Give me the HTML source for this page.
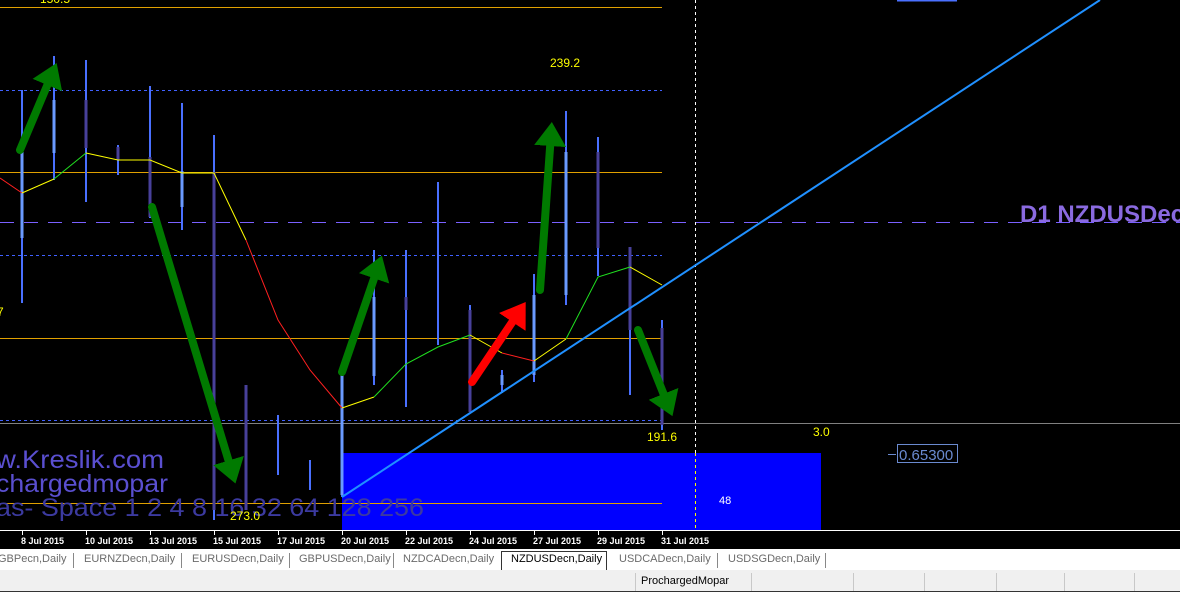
<!DOCTYPE html>
<html><head><meta charset="utf-8"><style>
body{margin:0;width:1180px;height:592px;overflow:hidden;background:#000;font-family:"Liberation Sans",sans-serif}
svg{position:absolute;left:0;top:0}
.tabs{position:absolute;left:0;top:550px;width:1180px;height:19px;background:#fff;border-top:1px solid #fff}
.tab{position:absolute;top:2px;font-size:11px;color:#6b6b6b;white-space:nowrap}
.sep{position:absolute;top:2px;width:1px;height:15px;background:#888}
.status{position:absolute;left:0;top:570px;width:1180px;height:21px;background:#f0f0f0;border-bottom:1px solid #333}
.ss{position:absolute;top:3px;width:1px;height:18px;background:#c8c8c8}
</style></head><body>
<svg width="1180" height="550" viewBox="0 0 1180 550" font-family="Liberation Sans, sans-serif">
<rect x="0" y="0" width="1180" height="550" fill="#000"/>
<rect x="342" y="453" width="479" height="77" fill="#0000ff"/>
<g stroke-width="1" shape-rendering="crispEdges">
<line x1="0" y1="7.5" x2="662" y2="7.5" stroke="#e0a000"/>
<line x1="0" y1="90.5" x2="662" y2="90.5" stroke="#4060ff" stroke-dasharray="3,3"/>
<line x1="0" y1="172.5" x2="662" y2="172.5" stroke="#e0a000"/>
<line x1="0" y1="222.5" x2="1180" y2="222.5" stroke="#7a60ff" stroke-dasharray="14,10"/>
<line x1="0" y1="255.5" x2="662" y2="255.5" stroke="#4060ff" stroke-dasharray="3,3"/>
<line x1="0" y1="338.5" x2="662" y2="338.5" stroke="#e0a000"/>
<line x1="0" y1="420.5" x2="662" y2="420.5" stroke="#4060ff" stroke-dasharray="3,3"/>
<line x1="0" y1="423.5" x2="1180" y2="423.5" stroke="#808080"/>
<line x1="0" y1="503.5" x2="662" y2="503.5" stroke="#e0a000"/>
<line x1="695.5" y1="0" x2="695.5" y2="453" stroke="#fff" stroke-dasharray="3,3"/>
<line x1="695.5" y1="453" x2="695.5" y2="530" stroke="#ff0" stroke-dasharray="3,3"/>
<line x1="897" y1="0.5" x2="957" y2="0.5" stroke="#4a70ff" stroke-width="2"/>
<line x1="0" y1="530.5" x2="1180" y2="530.5" stroke="#fff"/>
</g>
<text x="-4" y="468" font-size="25" fill="#5a4fd0" textLength="168" lengthAdjust="spacingAndGlyphs">w.Kreslik.com</text>
<text x="-4" y="492" font-size="25" fill="#5a4fd0" textLength="172" lengthAdjust="spacingAndGlyphs">chargedmopar</text>
<text x="-4" y="516" font-size="25" fill="#3c3aa0" textLength="428" lengthAdjust="spacingAndGlyphs">as- Space 1 2 4 8 16 32 64 128 256</text>
<g stroke-width="2">
<g stroke="#4a70ff">
<line x1="22" y1="90" x2="22" y2="303"/><line x1="54" y1="56" x2="54" y2="180"/><line x1="86" y1="60" x2="86" y2="202"/>
<line x1="118" y1="145" x2="118" y2="175"/><line x1="150" y1="86" x2="150" y2="218"/><line x1="182" y1="103" x2="182" y2="230"/>
<line x1="214" y1="135" x2="214" y2="520"/><line x1="246" y1="385" x2="246" y2="510"/><line x1="278" y1="415" x2="278" y2="475"/>
<line x1="310" y1="460" x2="310" y2="490"/><line x1="342" y1="370" x2="342" y2="497"/><line x1="374" y1="250" x2="374" y2="385"/>
<line x1="406" y1="250" x2="406" y2="407"/><line x1="438" y1="182" x2="438" y2="345"/><line x1="470" y1="305" x2="470" y2="412"/>
<line x1="502" y1="370" x2="502" y2="393"/><line x1="534" y1="274" x2="534" y2="382"/><line x1="566" y1="111" x2="566" y2="305"/>
<line x1="598" y1="137" x2="598" y2="276"/><line x1="630" y1="247" x2="630" y2="395"/><line x1="662" y1="320" x2="662" y2="430"/>
</g>
<g stroke="#6a9aff" stroke-width="3">
<line x1="22" y1="152" x2="22" y2="238"/><line x1="54" y1="100" x2="54" y2="153"/><line x1="182" y1="171" x2="182" y2="207"/>
<line x1="342" y1="375" x2="342" y2="495"/><line x1="374" y1="297" x2="374" y2="376"/><line x1="502" y1="375" x2="502" y2="385"/>
<line x1="534" y1="295" x2="534" y2="375"/><line x1="566" y1="152" x2="566" y2="295"/>
</g>
<g stroke="#48409a" stroke-width="3">
<line x1="86" y1="100" x2="86" y2="148"/><line x1="118" y1="147" x2="118" y2="160"/><line x1="150" y1="157" x2="150" y2="217"/>
<line x1="214" y1="172" x2="214" y2="510"/><line x1="246" y1="385" x2="246" y2="510"/><line x1="406" y1="297" x2="406" y2="310"/>
<line x1="470" y1="310" x2="470" y2="412"/><line x1="598" y1="152" x2="598" y2="248"/><line x1="630" y1="247" x2="630" y2="330"/>
<line x1="662" y1="328" x2="662" y2="425"/>
</g>
</g>
<g fill="none" stroke-width="1">
<polyline stroke="#ff2020" points="0,178 22,193"/>
<polyline stroke="#ffff00" points="22,193 54,179"/>
<polyline stroke="#20e020" points="54,179 86,153"/>
<polyline stroke="#ffff00" points="86,153 118,160 150,160 182,173 214,173 246,240"/>
<polyline stroke="#ff2020" points="246,240 278,320 310,370 342,408"/>
<polyline stroke="#ffff00" points="342,408 374,397"/>
<polyline stroke="#20e020" points="374,397 406,364 438,347 470,335"/>
<polyline stroke="#ffff00" points="470,335 502,353"/>
<polyline stroke="#ff2020" points="502,353 534,361"/>
<polyline stroke="#ffff00" points="534,361 566,339"/>
<polyline stroke="#20e020" points="566,339 598,277 630,267"/>
<polyline stroke="#ffff00" points="630,267 662,285"/>
</g>
<line x1="342" y1="497" x2="1100" y2="0" stroke="#2090ff" stroke-width="2"/>
<defs>
<marker id="hg" markerWidth="4" markerHeight="4" refX="1.5" refY="2" orient="auto" markerUnits="strokeWidth"><path d="M0,0 L3,2 L0,4 Z" fill="#007a00"/></marker>
<marker id="hr" markerWidth="4" markerHeight="4" refX="1.5" refY="2" orient="auto" markerUnits="strokeWidth"><path d="M0,0 L3,2 L0,4 Z" fill="#ff0000"/></marker>
</defs>
<g stroke="#007a00" stroke-width="8" stroke-linecap="round" marker-end="url(#hg)">
<line x1="20" y1="150" x2="52" y2="74"/>
<line x1="152" y1="207" x2="232" y2="472"/>
<line x1="342" y1="372" x2="378" y2="267"/>
<line x1="540" y1="290" x2="551" y2="134"/>
<line x1="638" y1="330" x2="668" y2="405"/>
</g>
<line x1="472" y1="382" x2="519" y2="312" stroke="#ff0000" stroke-width="8" stroke-linecap="round" marker-end="url(#hr)"/>
<g font-size="12" fill="#ffff00">
<text x="40" y="3">150.5</text><text x="550" y="67">239.2</text><text x="647" y="441">191.6</text>
<text x="230" y="520">273.0</text><text x="-3" y="316">7</text><text x="813" y="436">3.0</text>
</g>
<text x="719" y="504" font-size="11" fill="#fff">48</text>
<line x1="888" y1="454.5" x2="896" y2="454.5" stroke="#6a8ad0"/>
<rect x="897.5" y="444.5" width="60" height="18" fill="none" stroke="#6a8ad0"/>
<text x="899" y="460" font-size="15" fill="#6a8ad0">0.65300</text>
<text x="1020" y="222" font-size="24" font-weight="bold" fill="#8a6ae0">D1 NZDUSDecn</text>
<g stroke="#fff" shape-rendering="crispEdges">
<line x1="22.5" y1="531" x2="22.5" y2="535"/><line x1="86.5" y1="531" x2="86.5" y2="535"/><line x1="150.5" y1="531" x2="150.5" y2="535"/>
<line x1="214.5" y1="531" x2="214.5" y2="535"/><line x1="278.5" y1="531" x2="278.5" y2="535"/><line x1="342.5" y1="531" x2="342.5" y2="535"/>
<line x1="406.5" y1="531" x2="406.5" y2="535"/><line x1="470.5" y1="531" x2="470.5" y2="535"/><line x1="534.5" y1="531" x2="534.5" y2="535"/>
<line x1="598.5" y1="531" x2="598.5" y2="535"/><line x1="662.5" y1="531" x2="662.5" y2="535"/>
</g>
<g font-size="9" font-weight="bold" fill="#fff">
<text x="21" y="544">8 Jul 2015</text><text x="85" y="544">10 Jul 2015</text><text x="149" y="544">13 Jul 2015</text>
<text x="213" y="544">15 Jul 2015</text><text x="277" y="544">17 Jul 2015</text><text x="341" y="544">20 Jul 2015</text>
<text x="405" y="544">22 Jul 2015</text><text x="469" y="544">24 Jul 2015</text><text x="533" y="544">27 Jul 2015</text>
<text x="597" y="544">29 Jul 2015</text><text x="661" y="544">31 Jul 2015</text>
</g>
<line x1="0" y1="549.5" x2="1180" y2="549.5" stroke="#fff"/>
</svg>
<div class="tabs">
<span class="tab" style="left:-2px">GBPecn,Daily</span><div class="sep" style="left:73px"></div>
<span class="tab" style="left:84px">EURNZDecn,Daily</span><div class="sep" style="left:181px"></div>
<span class="tab" style="left:192px">EURUSDecn,Daily</span><div class="sep" style="left:289px"></div>
<span class="tab" style="left:299px">GBPUSDecn,Daily</span><div class="sep" style="left:393px"></div>
<span class="tab" style="left:403px">NZDCADecn,Daily</span>
<div style="position:absolute;left:501px;top:0;width:104px;height:18px;border:1px solid #333;background:#fff"></div>
<span class="tab" style="left:511px;color:#000">NZDUSDecn,Daily</span>
<span class="tab" style="left:619px">USDCADecn,Daily</span><div class="sep" style="left:717px"></div>
<span class="tab" style="left:728px">USDSGDecn,Daily</span><div class="sep" style="left:825px"></div>
</div>
<div class="status">
<div class="ss" style="left:635px"></div><div class="ss" style="left:751px"></div><div class="ss" style="left:853px"></div>
<div class="ss" style="left:924px"></div><div class="ss" style="left:996px"></div><div class="ss" style="left:1064px"></div><div class="ss" style="left:1134px"></div>
<span style="position:absolute;left:641px;top:5px;font-size:11px;color:#000">ProchargedMopar</span>
</div>
</body></html>
